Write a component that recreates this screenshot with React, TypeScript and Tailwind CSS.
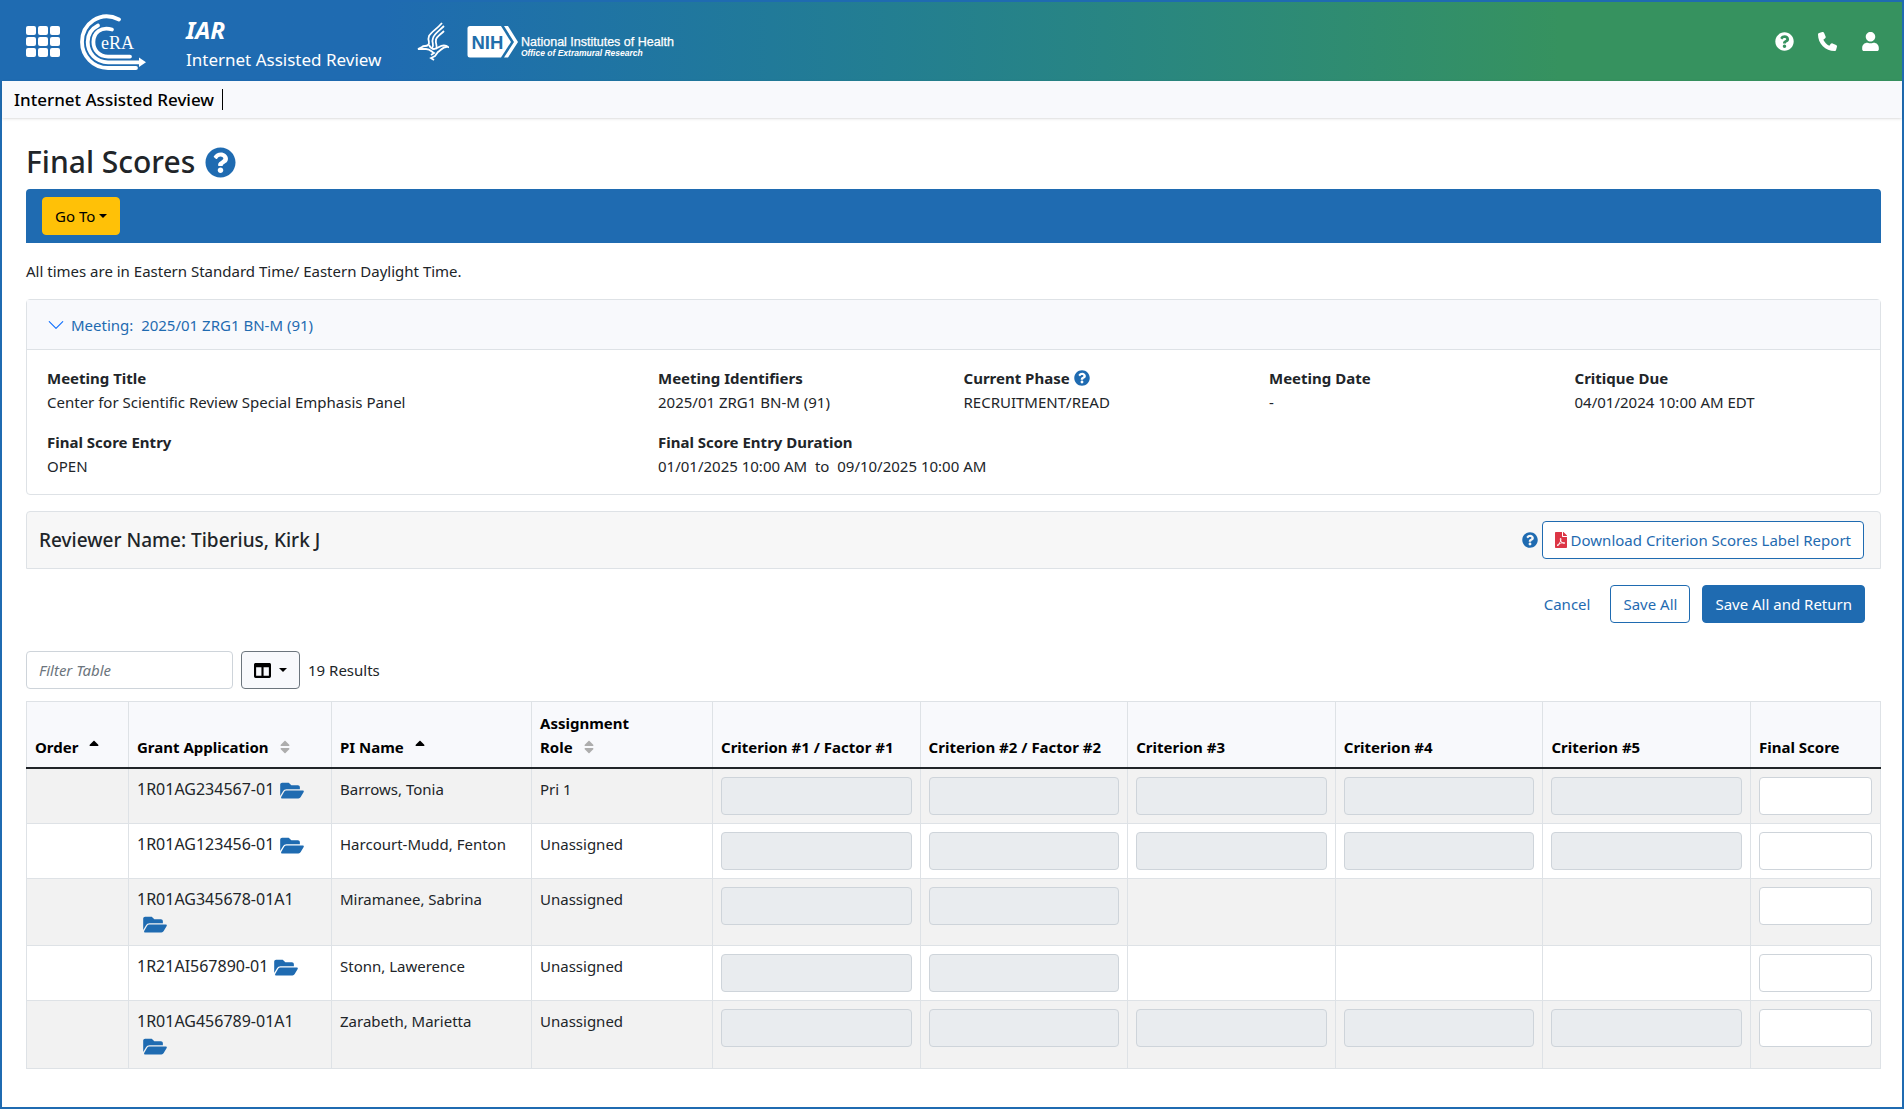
import type { ReactNode } from "react";
import { FaPhone } from "react-icons/fa6";
import {
  FaColumns,
  FaFilePdf,
  FaFolderOpen,
  FaQuestionCircle,
  FaSort,
  FaSortUp,
  FaUser,
} from "react-icons/fa";

type Application = {
  number: string;
  pi: string;
  role: string;
  criteria: number;
};

const applications: Application[] = [
  { number: "1R01AG234567-01", pi: "Barrows, Tonia", role: "Pri 1", criteria: 5 },
  { number: "1R01AG123456-01", pi: "Harcourt-Mudd, Fenton", role: "Unassigned", criteria: 5 },
  { number: "1R01AG345678-01A1", pi: "Miramanee, Sabrina", role: "Unassigned", criteria: 2 },
  { number: "1R21AI567890-01", pi: "Stonn, Lawerence", role: "Unassigned", criteria: 2 },
  { number: "1R01AG456789-01A1", pi: "Zarabeth, Marietta", role: "Unassigned", criteria: 5 },
];

const criteria = [
  "Criterion #1 / Factor #1",
  "Criterion #2 / Factor #2",
  "Criterion #3",
  "Criterion #4",
  "Criterion #5",
];

function EraLogo() {
  return (
    <svg width="66" height="56" viewBox="0 0 66 56" fill="none" role="img" aria-label="eRA">
      <g stroke="#fff" strokeWidth="3.8" strokeLinecap="round">
        <path d="M39 5.500 C20 -4 2 10 2 28 C2 42 13 54 28 54 H56" />
        <path d="M18 11.500 C11 15 7.700 21 7.700 28 C7.700 39 16 48.300 28 48.300 H60" />
        <path d="M32 15.500 C21 12 13.400 19 13.400 28 C13.400 36 19 42.600 28 42.600 H50" />
      </g>
      <path d="M59 43.500 L66 48.300 L59 53 Z" fill="#fff" />
      <text x="21" y="35" fill="#fff" fontFamily="Liberation Serif, serif" fontSize="18">
        eRA
      </text>
    </svg>
  );
}

function HhsLogo() {
  return (
    <svg width="32" height="39" viewBox="0 0 32 39" fill="none" stroke="#fff" strokeWidth="1.8" aria-hidden="true">
      <path d="M25 1 C20 7 14 10 12 14 C10 19 14 21 11 23 C9 25 7 23 5 25 L1 27 L9 27 C13 27 14 29 17 31 L14 33" />
      <path d="M27 4 C22 9 17 12 16 16 C14 21 18 23 15 26" />
      <path d="M27 9 C23 13 19 15 19 18 C18 22 21 23 19 27" />
      <path d="M12 23 C15 29 19 27 22 25 C25 23 29 23 31 25 C27 24 25 27 21 30 L18 34 L14 36 L17 38" />
    </svg>
  );
}

function NihLogo() {
  return (
    <svg width="210" height="34" viewBox="0 0 420 68" role="img" aria-label="National Institutes of Health, Office of Extramural Research">
      <path d="M6 2 H68 L88 34 L68 65 H6 Q1 65 1 60 V7 Q1 2 6 2 Z" fill="#fff" />
      <path d="M74 2 H82 L102 34 L82 65 H74 L94 34 Z" fill="#fff" />
      <text x="9" y="47" fill="#216eaa" fontFamily="Liberation Sans, sans-serif" fontWeight="700" fontSize="37">
        NIH
      </text>
      <text x="108" y="41" fill="#fff" fontFamily="Liberation Sans, sans-serif" fontSize="25" stroke="#fff" strokeWidth="0.5">
        National Institutes of Health
      </text>
      <text x="108" y="62" fill="#fff" fontFamily="Liberation Sans, sans-serif" fontStyle="italic" fontWeight="700" fontSize="17">
        Office of Extramural Research
      </text>
    </svg>
  );
}

function Caret() {
  return <span className="inline-block border-x-4 border-t-4 border-x-transparent border-t-current" />;
}

type FieldProps = {
  label: string;
  className?: string;
  help?: boolean;
  children: ReactNode;
};

function Field({ label, className, help, children }: FieldProps) {
  return (
    <div className={className}>
      <dt className="flex items-center gap-1 font-bold">
        {label}
        {help && <FaQuestionCircle className="size-4 text-[#1f6bb1]" />}
      </dt>
      <dd>{children}</dd>
    </div>
  );
}

export default function App() {
  return (
    <div className="min-h-screen border-2 border-[#1f6bb1] bg-white font-['Noto_Sans',sans-serif] text-[15px] leading-6 text-[#212529]">
      <header className="flex h-[79px] items-center bg-linear-to-r from-[#1f6bb1] from-20% to-[#36925f] to-82% pr-[22px] pl-6 text-white">
        <button type="button" aria-label="Applications" className="grid grid-cols-3 gap-[2px]">
          {Array.from({ length: 9 }, (_, i) => (
            <span key={i} className="h-[9px] w-[10px] rounded-[2px] bg-white" />
          ))}
        </button>
        <a href="#" className="ml-5">
          <EraLogo />
        </a>
        <div className="ml-10 pt-1">
          <div className="text-[24px] leading-8 font-bold italic">IAR</div>
          <div className="text-[17px] leading-7">Internet Assisted Review</div>
        </div>
        <div className="ml-9 flex items-center gap-[18px]">
          <HhsLogo />
          <NihLogo />
        </div>
        <nav className="ml-auto flex items-center gap-6">
          <a href="#" aria-label="Help"><FaQuestionCircle className="size-[19px]" /></a>
          <a href="#" aria-label="Contact"><FaPhone className="size-[19px]" /></a>
          <a href="#" aria-label="Account"><FaUser className="size-[19px]" /></a>
        </nav>
      </header>

      <div className="flex h-[37px] items-center bg-[#f8f9fc] px-3 text-[17px] font-medium text-black shadow-sm">
        <span className="border-r border-black pr-2 leading-[21px]">Internet Assisted Review</span>
      </div>

      <main className="pt-[25px] pr-[21px] pl-6">
        <h1 className="flex items-center gap-2.5 text-[30px] leading-[38px] font-medium">
          Final Scores
          <FaQuestionCircle className="size-[31px] text-[#1f6bb1]" />
        </h1>

        <div className="mt-2 rounded-t bg-[#1f6bb1] px-4 py-2">
          <button type="button" className="flex h-[38px] items-center gap-1 rounded border border-[#ffc107] bg-[#ffc107] px-3 text-black">
            Go To <Caret />
          </button>
        </div>

        <p className="mt-4">All times are in Eastern Standard Time/ Eastern Daylight Time.</p>

        <section className="mt-4 rounded border border-[#dee2e6]">
          <div className="flex h-[50px] items-center border-b border-[#dee2e6] bg-[#f8f9fc] px-5">
            <a href="#" className="flex items-center gap-1.5 text-[#1f6bb1]">
              <svg width="18" height="18" viewBox="0 0 16 16" fill="none" stroke="#0d6efd" strokeLinecap="round" strokeLinejoin="round">
                <path d="M2 5 L8 11 L14 5" />
              </svg>
              <span>Meeting:&nbsp; 2025/01 ZRG1 BN-M (91)</span>
            </a>
          </div>
          <dl className="grid grid-cols-6 gap-y-4 py-4 pl-5">
            <Field label="Meeting Title" className="col-span-2">
              Center for Scientific Review Special Emphasis Panel
            </Field>
            <Field label="Meeting Identifiers">2025/01 ZRG1 BN-M (91)</Field>
            <Field label="Current Phase" help>RECRUITMENT/READ</Field>
            <Field label="Meeting Date">-</Field>
            <Field label="Critique Due">04/01/2024 10:00 AM EDT</Field>
            <Field label="Final Score Entry" className="col-span-2">OPEN</Field>
            <Field label="Final Score Entry Duration" className="col-span-2">
              01/01/2025 10:00 AM&nbsp; to &nbsp;09/10/2025 10:00 AM
            </Field>
          </dl>
        </section>

        <section className="mt-4 flex h-[58px] items-center justify-between rounded-t border border-[#dee2e6] bg-[#f7f7f7] pr-4 pl-3">
          <h2 className="text-[19px] font-medium">Reviewer Name: Tiberius, Kirk J</h2>
          <div className="flex items-center gap-1">
            <FaQuestionCircle className="size-4 text-[#1f6bb1]" />
            <button type="button" className="flex h-[38px] items-center gap-1 rounded border border-[#1f6bb1] bg-white px-3 text-[#1f6bb1]">
              <FaFilePdf className="h-4 w-3 text-[#dc3545]" />
              Download Criterion Scores Label Report
            </button>
          </div>
        </section>

        <div className="mt-4 flex justify-end gap-3 pr-4 text-[#1f6bb1]">
          <button type="button" className="h-[38px] px-2">Cancel</button>
          <button type="button" className="h-[38px] rounded border border-[#1f6bb1] px-3">Save All</button>
          <button type="button" className="h-[38px] rounded border border-[#1f6bb1] bg-[#1f6bb1] px-3 text-white">Save All and Return</button>
        </div>

        <div className="mt-7 flex items-center gap-2">
          <input
            type="text"
            aria-label="Filter Table"
            placeholder="Filter Table"
            className="h-[38px] w-[207px] rounded border border-[#ced4da] px-3 placeholder:text-[#6c757d] placeholder:italic"
          />
          <button type="button" aria-label="Columns" className="flex h-[38px] items-center gap-2 rounded border border-[#6c757d] bg-[#f8f9fc] px-3 text-black">
            <FaColumns className="size-[17px]" />
            <Caret />
          </button>
          <span>19 Results</span>
        </div>

        <table className="mt-3 mb-8 w-full table-fixed border-collapse text-left [&_td]:border [&_td]:border-[#dee2e6] [&_td]:p-2 [&_th]:border [&_th]:border-[#dee2e6] [&_th]:border-b-2 [&_th]:border-b-[#212529] [&_th]:px-2 [&_th]:pt-1 [&_th]:pb-2">
          <thead className="bg-[#f8f9fc] text-black">
            <tr className="h-[66px] align-bottom">
              <th className="w-[102px]">
                <span className="flex items-center gap-2">Order <FaSortUp className="size-4" /></span>
              </th>
              <th className="w-[203px]">
                <span className="flex items-center gap-2">Grant Application <FaSort className="size-4 text-[#adadad]" /></span>
              </th>
              <th className="w-[200px]">
                <span className="flex items-center gap-2">PI Name <FaSortUp className="size-4" /></span>
              </th>
              <th className="w-[181px]">
                Assignment
                <span className="flex items-center gap-2">Role <FaSort className="size-4 text-[#adadad]" /></span>
              </th>
              {criteria.map((name) => (
                <th key={name}>{name}</th>
              ))}
              <th className="w-[130px]">Final Score</th>
            </tr>
          </thead>
          <tbody>
            {applications.map((app) => (
              <tr key={app.number} className="align-top odd:bg-[#f2f2f2]">
                <td />
                <td className="text-base leading-6">
                  {app.number}
                  <a href="#" aria-label={`Open ${app.number}`} className="inline-flex h-[26px] items-center px-1.5 align-middle text-[#1f6bb1]">
                    <FaFolderOpen className="h-[21px] w-6" />
                  </a>
                </td>
                <td>{app.pi}</td>
                <td>{app.role}</td>
                {criteria.map((name, i) => (
                  <td key={name}>
                    {i < app.criteria && (
                      <input
                        type="text"
                        disabled
                        aria-label={`${name} for ${app.number}`}
                        className="block h-[38px] w-full rounded border border-[#ced4da] bg-[#e9ecef]"
                      />
                    )}
                  </td>
                ))}
                <td>
                  <input
                    type="text"
                    aria-label={`Final Score for ${app.number}`}
                    className="block h-[38px] w-full rounded border border-[#ced4da] bg-white"
                  />
                </td>
              </tr>
            ))}
          </tbody>
        </table>
      </main>
    </div>
  );
}
